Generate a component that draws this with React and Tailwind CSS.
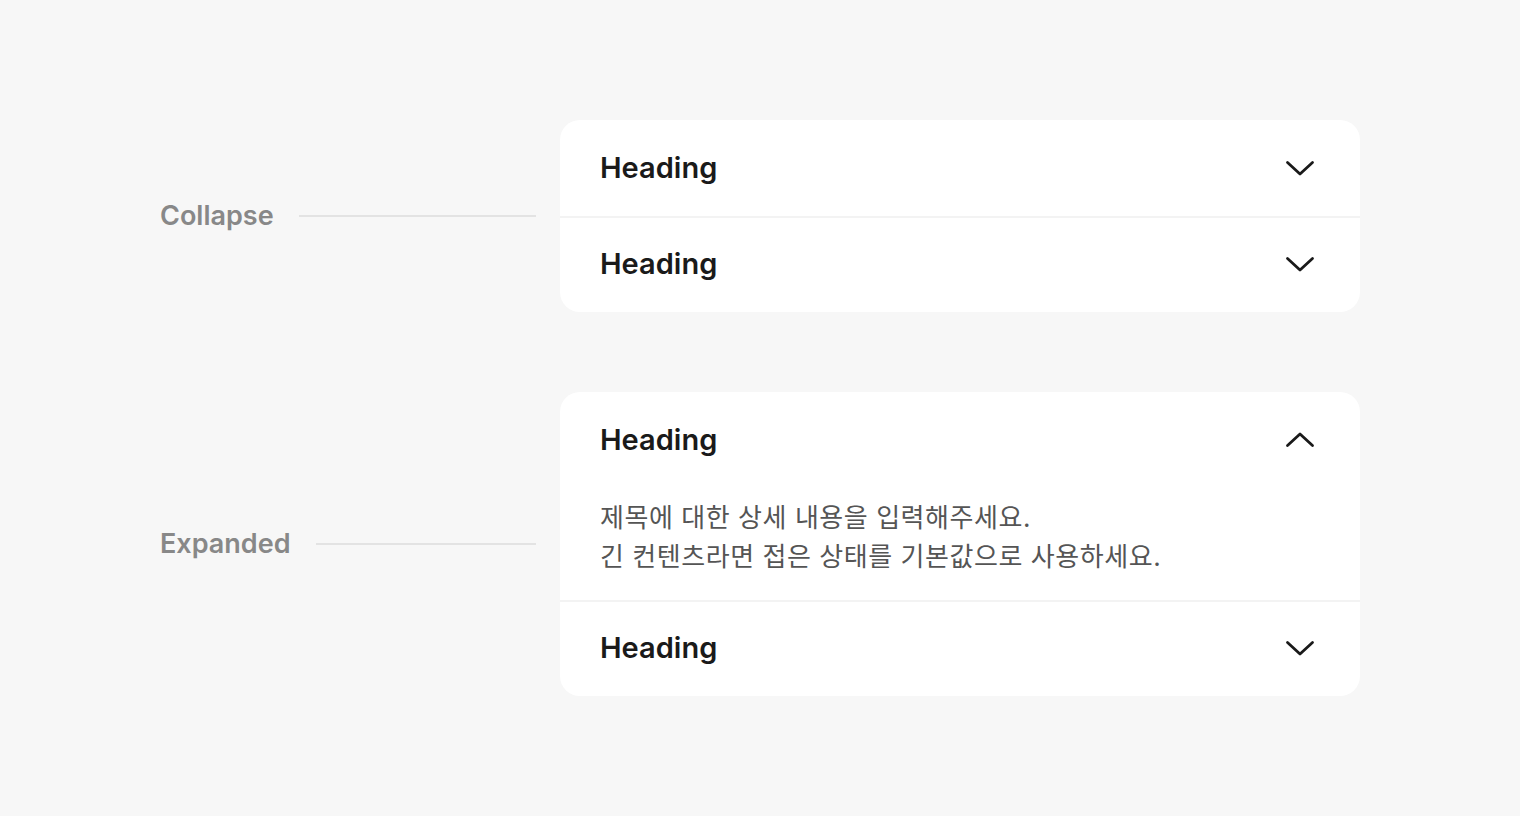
import React from 'react';

const font = { fontFamily: 'Inter, "Noto Sans CJK KR", sans-serif' };

function Chevron({ up }) {
  return (
    <svg width="40" height="40" viewBox="0 0 40 40" fill="none" className="shrink-0">
      <polyline
        points={up ? '7.5,25.5 20,14 32.5,25.5' : '7.5,14.5 20,26 32.5,14.5'}
        stroke="#1a1a1a"
        strokeWidth="2.8"
        strokeLinecap="round"
        strokeLinejoin="round"
      />
    </svg>
  );
}

function Row({ title, open, children, first }) {
  return (
    <div className={first ? '' : 'border-t-2 border-[#f3f3f3]'}>
      <div className={`flex items-center justify-between px-10 ${first ? 'h-24' : 'h-[94px] pb-[2px]'}`}>
        <span className="text-[29px] font-semibold text-[#1a1a1a]">{title}</span>
        <Chevron up={open} />
      </div>
      {open && (
        <div className="px-10 pt-[10px] pb-6 text-[26px] leading-[39px] tracking-[0.55px] text-[#555555]">
          {children}
        </div>
      )}
    </div>
  );
}

function Section({ label, children }) {
  return (
    <div className="flex items-center gap-6">
      <div className="flex w-[376px] items-center gap-[25px]">
        <span className="text-[27px] font-semibold text-[#888888]">{label}</span>
        <div className="h-[2px] flex-1 bg-[#e3e3e3]" />
      </div>
      <div className="w-[800px] overflow-hidden rounded-[20px] bg-white">{children}</div>
    </div>
  );
}

export default function App() {
  return (
    <div className="min-h-screen bg-[#f7f7f7] pt-[120px] pl-[160px]" style={font}>
      <div className="flex flex-col gap-20">
        <Section label="Collapse">
          <Row title="Heading" first />
          <Row title="Heading" />
        </Section>
        <Section label="Expanded">
          <Row title="Heading" open first>
            <p>제목에 대한 상세 내용을 입력해주세요.</p>
            <p>긴 컨텐츠라면 접은 상태를 기본값으로 사용하세요.</p>
          </Row>
          <Row title="Heading" />
        </Section>
      </div>
    </div>
  );
}
